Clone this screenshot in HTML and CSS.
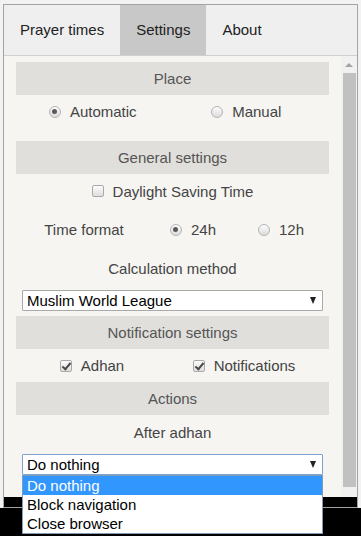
FILE: index.html
```html
<!DOCTYPE html>
<html lang="en">
  <head>
    <meta charset="UTF-8" />
    <meta name="viewport" content="width=device-width, initial-scale=1.0" />
    <title>Prayer times - Settings</title>
    <link rel="stylesheet" href="styles.css">
  </head>
  <body>
    <div class="frame">
      <div class="popup">
        <div class="tabs">
          <div class="tab">Prayer times</div>
          <div class="tab active">Settings</div>
          <div class="tab">About</div>
        </div>

        <div class="content">
          <div class="settings">
            <div class="section-title">Place</div>
            <div class="row halves place-row">
              <label class="option"><span class="radio checked"></span>Automatic</label>
              <label class="option"><span class="radio"></span>Manual</label>
            </div>

            <div class="section-title">General settings</div>
            <div class="row single">
              <label class="option"><span class="checkbox"></span>Daylight Saving Time</label>
            </div>
            <div class="row thirds time-row">
              <span class="label">Time format</span>
              <label class="option"><span class="radio checked"></span>24h</label>
              <label class="option"><span class="radio"></span>12h</label>
            </div>
            <div class="row single">
              <span class="label">Calculation method</span>
            </div>
            <div class="select">
              <span>Muslim World League</span>
              <span class="arrow"></span>
            </div>

            <div class="section-title">Notification settings</div>
            <div class="row halves notif-row">
              <label class="option"><span class="checkbox checked"></span>Adhan</label>
              <label class="option"><span class="checkbox checked"></span>Notifications</label>
            </div>

            <div class="section-title">Actions</div>
            <div class="row single">
              <span class="label">After adhan</span>
            </div>
            <div class="select-wrap">
              <div class="select focused">
                <span>Do nothing</span>
                <span class="arrow"></span>
              </div>
              <ul class="dropdown">
                <li class="selected">Do nothing</li>
                <li>Block navigation</li>
                <li>Close browser</li>
              </ul>
            </div>
          </div>

          <div class="scrollbar">
            <div class="scroll-up"></div>
            <div class="scroll-thumb"></div>
          </div>
        </div>
      </div>
    </div>
  </body>
</html>
```

FILE: styles.css
```css
* {
  margin: 0;
  padding: 0;
  box-sizing: border-box;
  font-family: "Liberation Sans", Arial, sans-serif;
}
body {
  background-color: #000;
  height: 536px;
  overflow: hidden;
}
.frame {
  background-color: #f2f2f2;
  padding: 4px 3px 0 3px;
  height: 508px;
}
.popup {
  width: 355px;
  height: 504px;
  border: 1px solid #a3a3a3;
  background-color: #000;
}
.tabs {
  display: flex;
  height: 51px;
  background-color: #efefef;
  border-bottom: 1px solid #cfcfcf;
}
.tab {
  padding: 0 16px 0 16px;
  font-size: 15px;
  line-height: 50px;
  color: #222;
}
.tab.active {
  background-color: #c8c8c8;
}
.content {
  display: flex;
  height: 441px;
  background-color: #f6f5f2;
}
.settings {
  flex: 1;
  padding: 6px 12px 0 12px;
}
.section-title {
  height: 33px;
  line-height: 33px;
  background-color: #e0dfdb;
  color: #555;
  font-size: 15px;
  text-align: center;
}
.row {
  display: grid;
  align-items: center;
  font-size: 15px;
  color: #444;
}
.row.single {
  grid-template-columns: 1fr;
  height: 34px;
  justify-items: center;
}
.row.halves {
  grid-template-columns: 1fr 1fr;
  height: 33px;
  justify-items: center;
}
.place-row {
  height: 32px;
  margin-bottom: 13px;
  padding-right: 6px;
}
.notif-row {
  padding-right: 9px;
}
.row.thirds {
  grid-template-columns: 136px 82px 94px;
  justify-items: center;
}
.time-row {
  height: 43px;
}
.option {
  display: flex;
  align-items: center;
  gap: 9px;
}
.radio {
  position: relative;
  width: 12px;
  height: 12px;
  border: 1px solid #b4b4b4;
  border-radius: 50%;
  background: linear-gradient(#fcfcfc, #dcdcdc);
}
.radio.checked::after {
  content: "";
  position: absolute;
  left: 2.5px;
  top: 2.5px;
  width: 5px;
  height: 5px;
  border-radius: 50%;
  background-color: #5a5a5a;
}
.checkbox {
  position: relative;
  width: 12px;
  height: 12px;
  border: 1px solid #a9a9a9;
  border-radius: 2px;
  background: linear-gradient(#fcfcfc, #dedede);
}
.checkbox.checked::after {
  content: "";
  position: absolute;
  left: 3px;
  top: 0px;
  width: 3px;
  height: 7px;
  border: solid #4a4a4a;
  border-width: 0 2px 2px 0;
  transform: rotate(40deg);
}
.select {
  display: flex;
  align-items: center;
  justify-content: space-between;
  height: 21px;
  margin: 5px 6px 5px 6px;
  padding: 0 6px 0 4px;
  background-color: #fff;
  border: 1px solid #a9a9a9;
  border-radius: 1px;
  font-size: 15px;
  color: #000;
}
.select .arrow {
  width: 0;
  height: 0;
  border-left: 3.5px solid transparent;
  border-right: 3.5px solid transparent;
  border-top: 7px solid #222;
}
.select-wrap {
  position: relative;
}
.select.focused {
  border-color: #7da2ce;
}
.dropdown {
  position: absolute;
  left: 6px;
  right: 6px;
  top: 21px;
  list-style: none;
  background-color: #fff;
  border: 1px solid #7f9db9;
  font-size: 15px;
  color: #000;
  z-index: 2;
}
.dropdown li {
  height: 19px;
  line-height: 19px;
  padding-left: 4px;
}
.dropdown li.selected {
  background-color: #3296ff;
  color: #fff;
}
.scrollbar {
  width: 16px;
  height: 441px;
  background-color: #f1f1f1;
  display: flex;
  flex-direction: column;
  align-items: center;
}
.scroll-up {
  width: 0;
  height: 0;
  margin-top: 7px;
  border-left: 4px solid transparent;
  border-right: 4px solid transparent;
  border-bottom: 4px solid #a3a3a3;
}
.scroll-thumb {
  width: 13px;
  height: 414px;
  margin-top: 6px;
  background-color: #c1c1c1;
}
```
